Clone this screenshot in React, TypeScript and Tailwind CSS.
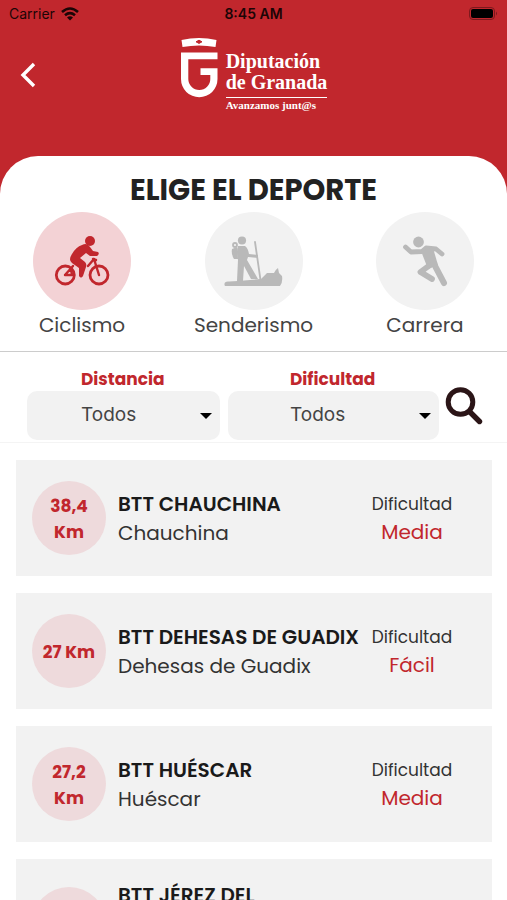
import React from "react";

const sans = "font-['Poppins','Inter',sans-serif]";

function Logo() {
  return (
    <div className="flex gap-2 text-white">
      <svg className="h-[62px] w-[38px]" viewBox="0 0 38 62" fill="currentColor" aria-hidden="true">
        <path d="M1.500 3Q19 -1 36.500 3L35.500 10Q19 7 2.500 10Z" />
        <path d="M16 4.800L19 3.200L22 4.800L19 6.400Z" fill="#c1272d" stroke="#c1272d" />
        <path d="M1 15.500H37.500V22.300H8.300V42A11 11 0 0 0 30.300 42V38H20.500V31.300H37.500V42A18.200 18.200 0 0 1 1 42Z" />
      </svg>
      <div className="pt-[14px] font-['Liberation_Serif',serif] font-bold">
        <div className="border-b border-white pb-1 text-[20px] leading-[21px]">
          <div>Diputación</div>
          <div>de Granada</div>
        </div>
        <div className="text-[11px] leading-[14px]">Avanzamos junt@s</div>
      </div>
    </div>
  );
}

function BikeIcon() {
  return (
    <svg viewBox="0 0 98 98" className="size-full text-[#c1272d]" fill="none" stroke="currentColor" strokeLinecap="round" strokeLinejoin="round" aria-hidden="true">
      <circle cx="57" cy="29" r="5" fill="currentColor" stroke="none" />
      <circle cx="32.3" cy="63" r="9" strokeWidth="2.8" />
      <circle cx="66" cy="63" r="9" strokeWidth="2.8" />
      <path d="M49 33Q54 30 57 35L60 39L65 40Q67 42 64 44L57 44L53 41L47 46L52 50Q54 52 53 55L50 64Q48 67 46 64V56L39 51Q35 48 39 42Q43 35 49 33Z" fill="currentColor" stroke="none" />
      <path d="M32 63L40 54M32 63H39L38 57M55 54L61 47L66 63M60 47L63 48" strokeWidth="2.4" />
    </svg>
  );
}

function HikerIcon() {
  return (
    <svg viewBox="0 0 98 98" className="size-full text-[#b9b9b9]" fill="none" stroke="currentColor" strokeLinecap="round" strokeLinejoin="round" aria-hidden="true">
      <circle cx="37" cy="28.500" r="4.100" fill="currentColor" stroke="none" />
      <circle cx="30" cy="33" r="2" strokeWidth="1.800" />
      <path d="M27 37L32 35L33 47H29Q26 42 27 37Z" fill="currentColor" stroke="none" />
      <path d="M33 34H40Q43 36 44 42L53 43V46L43 45L42 48L53 67H46L39 54L38 69H32L33 48Q31 39 33 34Z" fill="currentColor" stroke="none" />
      <path d="M50 30L55.500 68" strokeWidth="1.800" />
      <path d="M19.500 73Q19 69 24 69.500L33 69L56 67L62 61L69 61Q70 58 73 56L74 61L77 64Q78 70 75 74H20Z" fill="currentColor" stroke="none" />
    </svg>
  );
}

function RunnerIcon() {
  return (
    <svg viewBox="0 0 98 98" className="size-full text-[#b9b9b9]" fill="none" stroke="currentColor" strokeLinecap="round" strokeLinejoin="round" aria-hidden="true">
      <circle cx="42.500" cy="30" r="5.400" fill="currentColor" stroke="none" />
      <path d="M29.500 35L35 40L46 39.500L50 36L60 37L66 42" strokeWidth="4.800" />
      <path d="M45 39L57 36L62 53L52 57Z" fill="currentColor" stroke="none" />
      <path d="M58 52L68 71" strokeWidth="6" />
      <path d="M54 53L44.500 60L56 67" strokeWidth="5.800" />
    </svg>
  );
}

const sports = [
  { name: "Ciclismo", icon: <BikeIcon />, active: true },
  { name: "Senderismo", icon: <HikerIcon />, active: false },
  { name: "Carrera", icon: <RunnerIcon />, active: false },
];

const routes = [
  { km: "38,4", title: "BTT CHAUCHINA", town: "Chauchina", level: "Media" },
  { km: "27", title: "BTT DEHESAS DE GUADIX", town: "Dehesas de Guadix", level: "Fácil" },
  { km: "27,2", title: "BTT HUÉSCAR", town: "Huéscar", level: "Media" },
  { km: "33,5", title: "BTT JÉREZ DEL MARQUESADO", town: "Jérez del Marquesado", level: "Media" },
];

function Filter({ id, label, className, indent }: { id: string; label: string; className: string; indent: string }) {
  return (
    <div className={className}>
      <label htmlFor={id} className={`block text-[17px] leading-6 font-bold text-[#c1272d] ${indent}`}>
        {label}
      </label>
      <div className="grid items-center">
        <select id={id} className={`col-start-1 row-start-1 h-[49px] w-full appearance-none rounded-[10px] bg-[#f2f2f2] text-[19px] text-[#444] [font-family:Inter,sans-serif] ${indent}`}>
          <option>Todos</option>
        </select>
        <svg viewBox="0 0 12 6" className="pointer-events-none col-start-1 row-start-1 mr-2 h-[6px] w-3 justify-self-end" aria-hidden="true">
          <path d="M0 0H12L6 6Z" />
        </svg>
      </div>
    </div>
  );
}

export default function App() {
  return (
    <div className={`h-screen overflow-hidden bg-[#c1272d] text-[#222] ${sans}`}>
      <header className="h-[156px]">
        <div className="grid h-[27px] grid-cols-3 items-center px-[9px] text-[14px] text-[#1c0506] [font-family:Inter,sans-serif]">
          <div className="flex items-center gap-[6px]">
            Carrier
            <svg viewBox="0 0 18 14" className="h-[14px] w-[18px]" fill="none" stroke="currentColor" strokeWidth="2.600" aria-hidden="true">
              <path d="M1 5Q9 -2 17 5M4 8.200Q9 4 14 8.200" />
              <path d="M9 13.500L6 10.500Q9 8.200 12 10.500Z" fill="currentColor" stroke="none" />
            </svg>
          </div>
          <div className="text-center font-semibold">8:45 AM</div>
          <svg viewBox="0 0 29 13" className="h-[13px] w-[29px] justify-self-end" aria-hidden="true">
            <rect x="0.500" y="0.500" width="25" height="12" rx="3.500" fill="none" stroke="#7d191d" />
            <rect x="2" y="2" width="22" height="9" rx="2" />
            <path d="M27 4.500Q29 6.500 27 8.500Z" fill="#7d191d" />
          </svg>
        </div>
        <div className="grid grid-cols-[1fr_auto_1fr] pt-[10px]">
          <button aria-label="Volver" className="ml-4 flex size-6 items-center justify-center self-center text-white">
            <svg viewBox="0 0 24 26" className="h-[26px] w-6" fill="none" stroke="currentColor" strokeWidth="3.400" aria-hidden="true">
              <path d="M18 2L7 13L18 24" />
            </svg>
          </button>
          <Logo />
        </div>
      </header>

      <main className="h-full rounded-t-[38px] bg-white">
        <h1 className="pt-4 text-center text-[29px] leading-9 font-bold">ELIGE EL DEPORTE</h1>
        <div className="flex justify-between border-b border-[#ccc] px-[33px] pt-1 pb-3">
          {sports.map((s) => (
            <button key={s.name} aria-pressed={s.active} className="flex w-[98px] flex-col items-center">
              <span className={`size-[98px] rounded-full ${s.active ? "bg-[#f3d2d5]" : "bg-[#f2f2f2]"}`}>{s.icon}</span>
              <span className="pt-[2px] text-[20px] leading-[27px] whitespace-nowrap text-[#444]">{s.name}</span>
            </button>
          ))}
        </div>

        <form className="flex gap-2 border-b border-[#f4f4f4] pt-[15px] pr-6 pb-[2px] pl-[27px]">
          <Filter id="distancia" label="Distancia" className="flex-[193]" indent="pl-[54px]" />
          <Filter id="dificultad" label="Dificultad" className="flex-[211]" indent="pl-[62px]" />
          <button type="button" aria-label="Buscar" className="-ml-[2px] self-start pt-5">
            <svg viewBox="0 0 38 38" className="size-[38px]" fill="none" stroke="#2b1517" strokeLinecap="round" aria-hidden="true">
              <circle cx="15.500" cy="15" r="12.300" strokeWidth="5" />
              <path d="M25 25L34.500 34.500" strokeWidth="5.400" />
            </svg>
          </button>
        </form>

        <ul className="flex flex-col gap-[17px] pt-[17px] pr-[15px] pl-4">
          {routes.map((r) => (
            <li key={r.title} className="flex items-center bg-[#f2f2f2] py-[21px] pr-[33px] pl-4">
              <div className="flex size-[74px] shrink-0 items-center justify-center rounded-full bg-[#eedadc] px-2 pt-px text-center text-[17px] leading-[26px] font-bold text-[#c1272d]">
                {r.km} Km
              </div>
              <div className="min-w-0 flex-1 pt-px pl-3 text-[20px] leading-[29px]">
                <h2 className="font-semibold text-[#1a1a1a]">{r.title}</h2>
                <p className="text-[#333]">{r.town}</p>
              </div>
              <div className="w-[94px] shrink-0 text-center leading-7">
                <div className="text-[17px] text-[#333]">Dificultad</div>
                <div className="text-[20px] text-[#c1272d]">{r.level}</div>
              </div>
            </li>
          ))}
        </ul>
      </main>
    </div>
  );
}
